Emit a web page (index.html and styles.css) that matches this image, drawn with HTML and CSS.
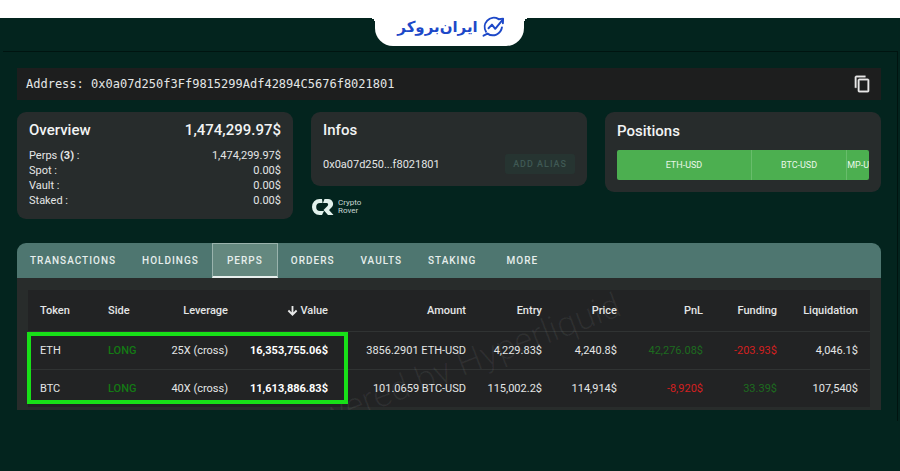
FILE: index.html
```
<!DOCTYPE html>
<html lang="en">
<head>
    <meta charset="UTF-8">
    <meta name="viewport" content="width=device-width, initial-scale=1.0">
    <title>Address Overview</title>
    <link rel="stylesheet" href="styles.css">
</head>
<body>
    <header class="site-header">
        <div class="brand" lang="fa" dir="rtl">
            <svg class="brand-icon" viewBox="0 0 24 24" aria-hidden="true">
                <path d="M17 4A9.600 9.600 0 0 0 4.200 17.400"/>
                <path d="M1.600 21.600l4.200-2.200A9.600 9.600 0 0 0 20.800 13"/>
                <path d="M6.800 13.800l3.600-3.800 3.400 4.400L21.400 5"/>
                <path d="M17.400 4.400l4.600-.6-.2 4.800"/>
            </svg>
            <span>ایران‌بروکر</span>
        </div>
    </header>

    <main class="page">
        <div class="address-bar">
            <span>Address: 0x0a07d250f3Ff9815299Adf42894C5676f8021801</span>
            <button class="copy-btn" type="button" aria-label="Copy address">
                <svg viewBox="1 0 21 24" aria-hidden="true">
                    <path d="M16 1H4a2 2 0 0 0-2 2v14h2V3h12V1zm3 4H8a2 2 0 0 0-2 2v14a2 2 0 0 0 2 2h11a2 2 0 0 0 2-2V7a2 2 0 0 0-2-2zm0 16H8V7h11v14z"/>
                </svg>
            </button>
        </div>

        <div class="cards">
            <section class="card overview">
                <h2><span>Overview</span><span>1,474,299.97$</span></h2>
                <dl>
                    <div><dt>Perps <b>(3)</b> :</dt><dd>1,474,299.97$</dd></div>
                    <div><dt>Spot :</dt><dd>0.00$</dd></div>
                    <div><dt>Vault :</dt><dd>0.00$</dd></div>
                    <div><dt>Staked :</dt><dd>0.00$</dd></div>
                </dl>
            </section>

            <div class="infos-col">
                <section class="card infos">
                    <h2>Infos</h2>
                    <div class="alias-row">
                        <span>0x0a07d250...f8021801</span>
                        <button class="alias-btn" type="button" disabled>ADD ALIAS</button>
                    </div>
                </section>
                <div class="rover">
                    <svg viewBox="0 0 22 16" aria-hidden="true">
                        <path d="M10 0H7.500a7.500 8 0 0 0 0 16H10l2-4H8a3.800 4 0 0 1 0-8h2.500z"/>
                        <path d="M12.500 0H16a5 5 0 0 1 3.500 8.600L17 11l4.500 5H16l-4.500-5 4-4c1.300-1.400.4-3-1-3H11z"/>
                    </svg>
                    <span>Crypto<br>Rover</span>
                </div>
            </div>

            <section class="card positions">
                <h2>Positions</h2>
                <div class="position-bar">
                    <span class="eth">ETH-USD</span>
                    <span class="btc">BTC-USD</span>
                    <span class="other">MP-U</span>
                </div>
            </section>
        </div>

        <section class="account">
            <nav class="tabs">
                <button type="button">TRANSACTIONS</button>
                <button type="button">HOLDINGS</button>
                <button type="button" class="active">PERPS</button>
                <button type="button">ORDERS</button>
                <button type="button">VAULTS</button>
                <button type="button">STAKING</button>
                <button type="button">MORE</button>
            </nav>

            <div class="table-panel">
                <table>
                    <colgroup>
                        <col class="c-token">
                        <col class="c-side">
                        <col class="c-leverage">
                        <col class="c-value">
                        <col class="c-amount">
                        <col class="c-entry">
                        <col class="c-price">
                        <col class="c-pnl">
                        <col class="c-funding">
                        <col class="c-liq">
                    </colgroup>
                    <thead>
                        <tr>
                            <th>Token</th>
                            <th>Side</th>
                            <th>Leverage</th>
                            <th>
                                <svg class="sort" viewBox="0 0 12 12" aria-hidden="true"><path d="M6 1v9.500M1.500 6L6 10.500 10.500 6"/></svg>
                                Value
                            </th>
                            <th>Amount</th>
                            <th>Entry</th>
                            <th>Price</th>
                            <th>PnL</th>
                            <th>Funding</th>
                            <th>Liquidation</th>
                        </tr>
                    </thead>
                    <tbody>
                        <tr>
                            <td>ETH</td>
                            <td class="long">LONG</td>
                            <td>25X (cross)</td>
                            <td class="value">16,353,755.06$</td>
                            <td>3856.2901 ETH-USD</td>
                            <td>4,229.83$</td>
                            <td>4,240.8$</td>
                            <td class="gain">42,276.08$</td>
                            <td class="loss">-203.93$</td>
                            <td>4,046.1$</td>
                        </tr>
                        <tr>
                            <td>BTC</td>
                            <td class="long">LONG</td>
                            <td>40X (cross)</td>
                            <td class="value">11,613,886.83$</td>
                            <td>101.0659 BTC-USD</td>
                            <td>115,002.2$</td>
                            <td>114,914$</td>
                            <td class="loss">-8,920$</td>
                            <td class="gain">33.39$</td>
                            <td>107,540$</td>
                        </tr>
                    </tbody>
                </table>
                <div class="watermark" aria-hidden="true">Powered by Hyperliquid</div>
                <div class="highlight"></div>
            </div>
        </section>
    </main>
</body>
</html>
```
FILE: styles.css
```
* {
    box-sizing: border-box;
}

body {
    margin: 0;
    background-color: #03241e;
    color: #e4e6e6;
    font-family: Roboto, "Liberation Sans", sans-serif;
    font-size: 11px;
}

button {
    border: none;
    background: none;
    color: inherit;
    font-family: inherit;
    padding: 0;
}

.site-header {
    display: flex;
    justify-content: center;
    height: 51px;
    padding-right: 2px;
    background: linear-gradient(#fff 18px, transparent 18px);
}

.brand {
    position: relative;
    display: flex;
    align-items: center;
    justify-content: center;
    gap: 4px;
    width: 149px;
    height: 46px;
    padding: 7px 0 0 4px;
    background-color: #fff;
    border-radius: 0 0 18px 18px;
    color: #1d48c8;
    font-family: "DejaVu Sans", sans-serif;
    font-size: 15px;
    font-weight: bold;
    white-space: nowrap;
}

/* rounded inner corners where the tab meets the white strip */
.brand::before,
.brand::after {
    content: "";
    position: absolute;
    top: 18px;
    width: 5px;
    height: 5px;
}

.brand::before {
    left: -5px;
    background: radial-gradient(circle at 0 100%, transparent 5px, #fff 5px);
}

.brand::after {
    right: -5px;
    background: radial-gradient(circle at 100% 100%, transparent 5px, #fff 5px);
}

.brand-icon {
    width: 23px;
    height: 23px;
    fill: none;
    stroke: #1d48c8;
    stroke-width: 2;
    stroke-linecap: round;
    stroke-linejoin: round;
}

.page {
    margin: 0 2px 0 3px;
    padding: 16px 16px 11px 14px;
    border-top: 1px solid #001410;
    border-right: 1px solid #001410;
}

.address-bar {
    display: flex;
    align-items: center;
    justify-content: space-between;
    height: 32px;
    padding: 0 11px 0 9px;
    background-color: #1d1e1e;
    font-family: "DejaVu Sans Mono", monospace;
    font-size: 12px;
}

.copy-btn,
.copy-btn svg {
    display: block;
    width: 16px;
    height: 18px;
}

.copy-btn svg {
    fill: #e8e8e8;
    stroke: #e8e8e8;
    stroke-width: 0.5;
}

.cards {
    display: grid;
    grid-template-columns: repeat(3, 1fr);
    align-items: start;
    gap: 18px;
    margin-top: 12px;
}

.card {
    padding: 9px 12px;
    background-color: #272c2c;
    border-radius: 9px;
}

.card h2 {
    margin: 0;
    font-size: 15px;
    font-weight: 500;
    line-height: 19px;
    color: #f2f4f4;
}

.overview h2,
.overview dl div {
    display: flex;
    justify-content: space-between;
}

.overview dl {
    margin: 8px 0 2px;
    line-height: 15px;
}

.overview dd {
    margin: 0;
}

.alias-row {
    display: flex;
    align-items: center;
    justify-content: space-between;
    margin-top: 14px;
    padding-bottom: 3px;
}

.alias-btn {
    height: 20px;
    padding: 0 8px;
    background-color: #263431;
    border-radius: 3px;
    color: #3f5954;
    font-size: 9px;
    font-weight: 500;
    letter-spacing: 1px;
}

.rover {
    display: flex;
    align-items: center;
    gap: 4px;
    margin-top: 13px;
    padding-left: 1px;
    color: #c9d8d4;
    font-size: 8px;
    line-height: 8px;
}

.rover svg {
    width: 22px;
    height: 16px;
    fill: #e2f1ec;
}

.positions h2 {
    padding-top: 1px;
}

.position-bar {
    display: flex;
    height: 30px;
    margin: 9px 0 3px;
    border-radius: 2px;
    overflow: hidden;
    background-color: #4caf50;
    color: #e9f7e9;
    font-size: 9px;
    line-height: 30px;
    white-space: nowrap;
}

.position-bar span {
    flex-basis: 0;
    text-align: center;
}

.position-bar .eth {
    flex-grow: 135;
}

.position-bar .btc {
    flex-grow: 95;
    border-left: 1px solid #68bd6b;
}

.position-bar .other {
    flex-grow: 22;
    border-left: 1px solid #68bd6b;
}

.account {
    margin-top: 24px;
    border-radius: 9px 9px 0 0;
    overflow: hidden;
}

.tabs {
    display: flex;
    height: 35px;
    background-color: #4e7670;
}

.tabs button {
    min-width: 66px;
    padding: 0 13px;
    color: #e6eeec;
    font-size: 10px;
    font-weight: 500;
    letter-spacing: 1px;
}

.tabs .active {
    background-color: #64887f;
    border: 1px solid #9ab3ad;
    border-bottom: 2px solid #e8efed;
}

.table-panel {
    position: relative;
    padding: 12px 11px 3px;
    background-color: #282c2b;
    overflow: hidden;
}

table {
    width: 100%;
    table-layout: fixed;
    border-collapse: collapse;
    background-color: #222324;
}

.c-token { width: 68px; }
.c-side { width: 60px; }
.c-leverage { width: 84px; }
.c-value { width: 100px; }
.c-amount { width: 138px; }
.c-entry { width: 76px; }
.c-price { width: 75px; }
.c-pnl { width: 86px; }
.c-funding { width: 74px; }
.c-liq { width: 81px; }

th,
td {
    height: 38px;
    padding: 0 12px 0 4px;
    text-align: right;
    white-space: nowrap;
}

th {
    height: 41px;
    font-weight: 500;
}

tbody tr {
    border-top: 1px solid #303333;
}

th:nth-child(-n+2),
td:nth-child(-n+2) {
    padding-left: 12px;
    text-align: left;
}

.sort {
    width: 11px;
    height: 11px;
    vertical-align: -2px;
    fill: none;
    stroke: #e8e8e8;
    stroke-width: 2;
}

.long {
    color: #147a14;
    font-weight: 500;
}

.value {
    color: #fff;
    font-weight: bold;
}

.gain {
    color: #1d6b1f;
}

.loss {
    color: #d32020;
}

.watermark {
    position: absolute;
    left: 254px;
    top: 73px;
    color: rgba(255, 255, 255, 0.06);
    font-size: 35px;
    font-weight: 300;
    line-height: 35px;
    white-space: nowrap;
    transform: rotate(-21deg);
}

/* marks the token, side, leverage and value cells */
.highlight {
    position: absolute;
    left: 10px;
    top: 54px;
    width: 38%;
    max-width: 321px;
    height: 72px;
    border: 4px solid #18e018;
}
```
